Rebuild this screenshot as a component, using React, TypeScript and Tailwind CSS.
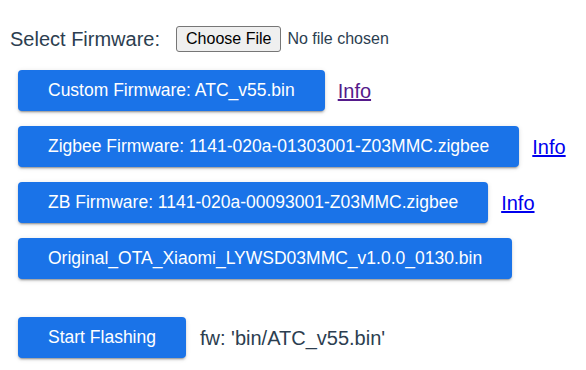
import React from "react";

const btn =
  "h-[41px] px-[30px] rounded-[4px] bg-[#1a73e8] text-white text-[17.5px] font-['Liberation_Sans',Arial,sans-serif] whitespace-nowrap shadow-[0_3px_1px_-2px_rgba(0,0,0,0.2),0_2px_2px_0_rgba(0,0,0,0.14),0_1px_5px_0_rgba(0,0,0,0.12)]";

function Row({ label, info, visited }: { label: string; info?: boolean; visited?: boolean }) {
  return (
    <div className="flex items-center">
      <button className={btn}>{label}</button>
      {info && (
        <a
          href="#"
          className={
            "ml-[13px] text-[20px] underline " + (visited ? "text-[#551a8b]" : "text-[#0000ee]")
          }
        >
          Info
        </a>
      )}
    </div>
  );
}

export default function App() {
  return (
    <div className="w-[586px] h-[370px] overflow-hidden bg-white font-['Liberation_Sans',Arial,sans-serif] text-[#2c3e50]">
      <div className="ml-[10px] h-0 shadow-[0_1px_6px_rgba(0,0,0,0.12)]" />
      <div className="mt-[26px] h-[26px] pl-[10px] flex items-center">
        <span className="text-[20px]">Select Firmware:</span>
        <input
          type="file"
          className="ml-[16px] text-[16px] text-[#2c3e50] font-['Liberation_Sans',Arial,sans-serif] file:mr-[6px] file:h-[26px] file:px-[9px] file:border file:border-solid file:border-[#767676] file:rounded-[3px] file:bg-[#efefef] file:text-black file:text-[16px] file:font-['Liberation_Sans',Arial,sans-serif]"
        />
      </div>
      <div className="mt-[18px] pl-[18px] flex flex-col gap-[15px]">
        <Row label="Custom Firmware: ATC_v55.bin" info visited />
        <Row label="Zigbee Firmware: 1141-020a-01303001-Z03MMC.zigbee" info />
        <Row label="ZB Firmware: 1141-020a-00093001-Z03MMC.zigbee" info />
        <Row label="Original_OTA_Xiaomi_LYWSD03MMC_v1.0.0_0130.bin" />
      </div>
      <div className="mt-[38px] pl-[18px] flex items-center">
        <button className={btn + " h-[40px]"}>Start Flashing</button>
        <span className="ml-[14px] text-[20px]">fw: 'bin/ATC_v55.bin'</span>
      </div>
    </div>
  );
}
